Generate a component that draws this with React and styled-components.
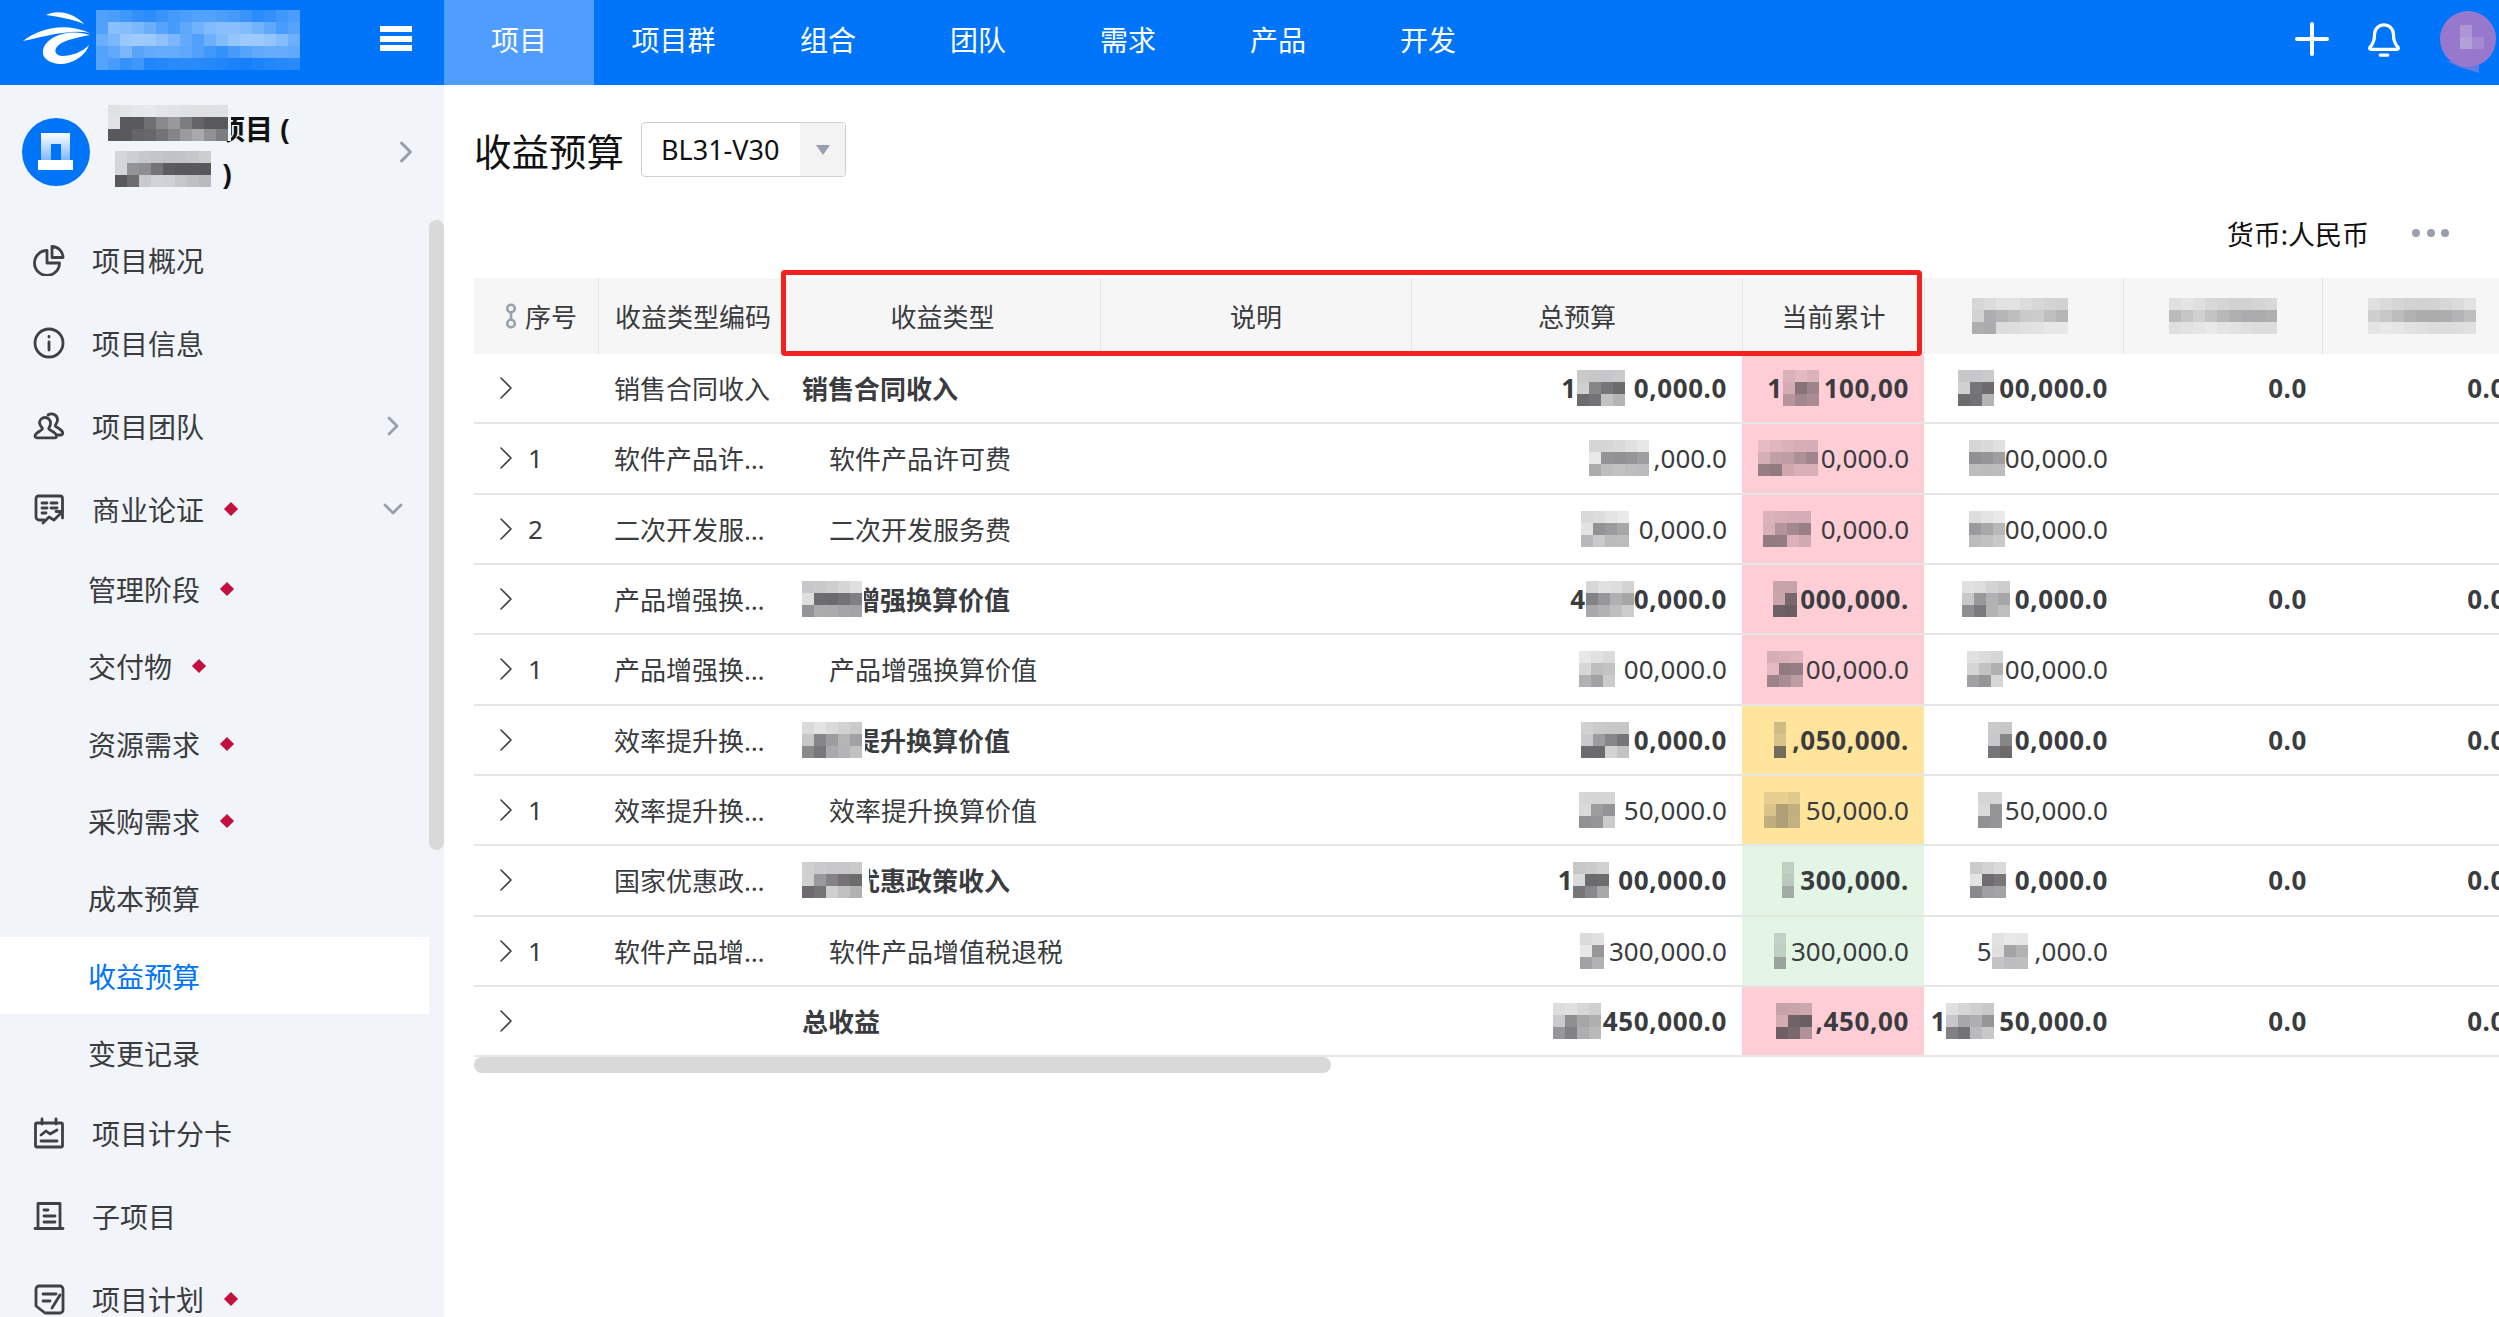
import React from 'react';
import styled, { createGlobalStyle } from 'styled-components';

const blue = '#0075fa';
const ink = '#3a3c40';
const columns = '124px 186px 316px 311px 331px 182px 199px 199px 199px';

const GlobalStyle = createGlobalStyle`
  html, body {
    margin: 0;
    height: 100%;
    overflow: hidden;
    background: #fff;
    font-family: "Noto Sans", "Noto Sans CJK SC", sans-serif;
    color: ${ink};
  }
  * { box-sizing: border-box; }
`;

const Page = styled.div`
  display: flex;
  flex-direction: column;
  height: 1317px;
  width: 2499px;
  overflow: hidden;
`;

const TopBar = styled.header`
  display: flex;
  align-items: stretch;
  flex: 0 0 85px;
  background: ${blue};
  color: #fff;
`;

const Brand = styled.div`
  display: flex;
  align-items: center;
  width: 444px;
  padding-left: 20px;
  & > svg {
    margin-bottom: 5px;
  }
`;

const BrandBlur = styled.div`
  margin-left: -14px;
  margin-bottom: 5px;
`;

const Burger = styled.div`
  display: flex;
  flex-direction: column;
  gap: 3.5px;
  width: 32px;
  margin-left: 70px;
  margin-bottom: 8px;
  span {
    height: 6px;
    background: #fff;
  }
`;

const Tab = styled.div`
  display: flex;
  align-items: center;
  justify-content: center;
  width: ${p => p.$w || 150}px;
  padding-bottom: 8px;
  font-size: 28px;
  background: ${p => (p.$active ? '#4f9eff' : 'transparent')};
`;

const TopActions = styled.div`
  display: flex;
  align-items: center;
  margin-left: auto;
  padding-right: 2px;
  gap: 38px;
  svg:not(:last-child) {
    margin-bottom: 8px;
  }
`;

const Body = styled.div`
  display: flex;
  flex: 1;
  min-height: 0;
`;

const Sidebar = styled.aside`
  position: relative;
  flex: 0 0 444px;
  background: #f1f4f8;
  overflow: hidden;
`;

const SideThumb = styled.div`
  position: absolute;
  top: 135px;
  right: 0;
  width: 15px;
  height: 630px;
  border-radius: 8px;
  background: #d9d9d9;
`;

const SideInner = styled.div`
  width: 429px;
`;

const ProjectHead = styled.div`
  display: flex;
  align-items: center;
  height: 133.5px;
  padding: 0 16px 0 22px;
`;

const ProjectName = styled.div`
  flex: 1;
  margin-left: 18px;
  margin-top: -2px;
  font-size: 28px;
  font-weight: 700;
  color: #111;
`;

const NameLine = styled.div`
  display: flex;
  align-items: center;
  height: 46px;
  margin-left: ${p => p.$indent || 0}px;
  & > span {
    margin-bottom: 10px;
  }
`;

const MenuItem = styled.div`
  display: flex;
  align-items: center;
  height: ${p => (p.$sub ? '77.3px' : '83px')};
  padding: 0 30px 0 ${p => (p.$sub ? '88px' : '33px')};
  gap: ${p => (p.$sub ? 0 : '27px')};
  font-size: 28px;
  color: ${p => (p.$active ? blue : ink)};
  background: ${p => (p.$active ? '#fff' : 'transparent')};
`;

const Diamond = styled.i`
  width: 10px;
  height: 10px;
  margin-left: ${p => (p.$sub ? '22px' : '-5px')};
  background: #c4103f;
  transform: rotate(45deg);
`;

const MenuArrow = styled.span`
  display: flex;
  margin-left: auto;
  margin-right: ${p => p.$nudge || 0}px;
`;

const Main = styled.main`
  flex: 1;
  min-width: 0;
  padding-left: 30px;
  overflow: hidden;
`;

const TitleRow = styled.div`
  display: flex;
  align-items: center;
  gap: 17px;
  height: 55px;
  margin-top: 37px;
`;

const Title = styled.h1`
  margin: 0;
  font-size: 37.5px;
  font-weight: 400;
  color: #111;
`;

const Select = styled.div`
  display: flex;
  align-items: stretch;
  width: 205px;
  height: 55px;
  border: 1.5px solid #cfcfcf;
  border-radius: 4px;
  overflow: hidden;
`;

const SelectValue = styled.div`
  display: flex;
  align-items: center;
  flex: 1;
  padding-left: 19px;
  font-size: 27px;
  color: #111;
`;

const SelectArrow = styled.div`
  display: flex;
  align-items: center;
  justify-content: center;
  width: 45px;
  background: #f3f3f3;
  &::before {
    content: '';
    border-left: 7px solid transparent;
    border-right: 7px solid transparent;
    border-top: 10px solid #9a9fae;
  }
`;

const InfoRow = styled.div`
  display: flex;
  justify-content: flex-end;
  align-items: center;
  gap: 43px;
  height: 44px;
  margin-top: 34px;
  padding-right: 50px;
`;

const Currency = styled.span`
  font-size: 27px;
  color: #111;
`;

const Dots = styled.div`
  display: flex;
  gap: 6.5px;
  i {
    width: 8px;
    height: 8px;
    border-radius: 50%;
    background: #9a9fae;
  }
`;

const TableWrap = styled.div`
  position: relative;
  margin-top: 23px;
`;

const RedBox = styled.div`
  position: absolute;
  left: 307px;
  top: -8px;
  width: 1141px;
  height: 86px;
  border: 5px solid #f5211e;
  border-radius: 4px;
  z-index: 2;
`;

const HeadRow = styled.div`
  display: grid;
  grid-template-columns: ${columns};
  height: 76px;
  background: #f6f6f6;
`;

const HeadCell = styled.div`
  display: flex;
  align-items: center;
  justify-content: ${p => (p.$center ? 'center' : 'flex-start')};
  gap: 8px;
  padding-left: ${p => (p.$center ? 0 : p.$pad || 16)}px;
  font-size: 26px;
  white-space: nowrap;
  border-left: ${p => (p.$first ? 'none' : '1.5px solid #e6e6e6')};
`;

const Row = styled.div`
  display: grid;
  grid-template-columns: ${columns};
  height: 70.33px;
`;

const tints = { pink: '#ffcdd6', yellow: '#ffe49c', green: '#e3f6e6' };

const Cell = styled.div`
  display: flex;
  align-items: center;
  justify-content: ${p => (p.$num ? 'flex-end' : 'flex-start')};
  min-width: 0;
  padding: 0 ${p => p.$right || 15}px 0 ${p => p.$left || 16}px;
  font-size: 26px;
  font-weight: ${p => (p.$bold ? 700 : 400)};
  letter-spacing: ${p => (p.$num && p.$bold ? '0.6px' : 0)};
  white-space: nowrap;
  background: ${p => tints[p.$tint] || 'transparent'};
  border-bottom: 2px solid #e6e6e6;
`;

const Clip = styled.span`
  overflow: hidden;
  text-overflow: ellipsis;
`;

const RowNo = styled.span`
  margin-left: 16px;
`;

const ScrollThumb = styled.div`
  width: 857px;
  height: 16px;
  border-radius: 8px;
  background: #d9d9d9;
`;

const BlurBox = styled.span`
  position: relative;
  z-index: 1;
  display: grid;
  flex: none;
  grid-template-columns: repeat(auto-fill, 12px);
  grid-auto-rows: 12px;
  width: ${p => p.$w}px;
  height: ${p => p.$rows * 12}px;
  margin-right: ${p => -(p.$over || 0)}px;
  overflow: hidden;
  background: ${p => p.$bg || 'transparent'};
`;

const levels = {
  cell: [0.16, 0.42, 0.26],
  head: [0.14, 0.3, 0.1],
  name: [0.08, 0.7, 0.58],
  lower: [0.2, 0.7, 0.24],
  brand: [0.24, 0.4, 0.46, 0.3, 0.12],
};

function Blur({ w, level = 'cell', over, bg, strong, light, seed = 1 }) {
  const base = levels[level];
  const perRow = Math.ceil(w / 12);
  const cells = [];
  base.forEach((alpha, r) => {
    for (let c = 0; c < perRow; c++) {
      const n = Math.abs(Math.sin((c + 1) * 12.9 + (r + 1) * 78.2 + seed * 3.7));
      const a = alpha * (0.65 + n * 0.7) * (strong ? 1.35 : 1);
      const color = light ? `rgba(255,255,255,${a})` : `rgba(62,60,64,${Math.min(a, 0.85)})`;
      cells.push(<i key={`${r}-${c}`} style={{ background: color }} />);
    }
  });
  return (
    <BlurBox $w={w} $rows={base.length} $over={over} $bg={bg}>
      {cells}
    </BlurBox>
  );
}

const LogoMark = () => (
  <svg width="90" height="80" viewBox="0 0 90 80" fill="#fff">
    <path d="M26 15C38 9 54 13 64 24 52 19 40 17 26 15Z" />
    <path d="M3 41C20 28 45 22 70 33 50 29 28 36 3 41Z" />
    <path d="M70 35C50 28 26 36 23 50 21 62 38 66 48 63 58 60 66 54 69 45 62 52 52 56 42 56 34 55 33 49 40 44 48 39 60 37 70 35Z" />
  </svg>
);

const PlusIcon = () => (
  <svg width="34" height="34" viewBox="0 0 34 34" fill="none" stroke="#fff" strokeWidth="4" strokeLinecap="round">
    <path d="M17 2v30M2 17h30" />
  </svg>
);

const BellIcon = () => (
  <svg width="34" height="38" viewBox="0 0 36 38" fill="none" stroke="#fff" strokeWidth="3.4" strokeLinecap="round" strokeLinejoin="round">
    <path d="M3 28c3-3 5-6 5-14a10 10 0 0 1 20 0c0 8 2 11 5 14 .6 1 0 2-1 2H4c-1 0-1.6-1-1-2z" />
    <path d="M14 36h8" />
  </svg>
);

const UserPic = () => (
  <svg width="58" height="64" viewBox="0 0 58 64">
    <path d="M8 50h32v12L20 56z" fill="#5f7be0" />
    <circle cx="29" cy="28" r="28" fill="#9878cc" />
    <rect x="21" y="14" width="12" height="12" fill="#ad95d6" />
    <rect x="21" y="26" width="12" height="12" fill="#b3a0da" />
    <rect x="33" y="26" width="12" height="12" fill="#a58ad3" />
  </svg>
);

const ProjectAvatar = () => (
  <svg width="68" height="68" viewBox="0 0 68 68">
    <defs>
      <linearGradient id="towerFade" x1="0" y1="0" x2="0" y2="1">
        <stop offset="0" stopColor="#fff" />
        <stop offset="1" stopColor="#7fb8ff" />
      </linearGradient>
    </defs>
    <circle cx="34" cy="34" r="34" fill={blue} />
    <path d="M19 15h29v27H39V26H29v16H19z" fill="url(#towerFade)" />
    <rect x="16" y="42" width="35" height="10" fill="#fff" />
  </svg>
);

const iconProps = {
  width: 32,
  height: 32,
  viewBox: '0 0 32 32',
  fill: 'none',
  stroke: '#3d4047',
  strokeWidth: 2.8,
  strokeLinecap: 'round',
  strokeLinejoin: 'round',
};

const PieIcon = () => (
  <svg {...iconProps}>
    <path d="M14 6.5A12.5 12.5 0 1 0 26.5 19H14z" />
    <path d="M19 2.5A11 11 0 0 1 30 13.5H19z" />
  </svg>
);

const InfoIcon = () => (
  <svg {...iconProps}>
    <circle cx="16" cy="16" r="14" />
    <path d="M16 15v8" />
    <path d="M16 9.5v.6" />
  </svg>
);

const TeamIcon = () => (
  <svg {...iconProps}>
    <path d="M12 7.5a5.5 5.5 0 0 1 5.5 6c0 2.500-1.500 3.700-1.800 5.300 0 1.400 7 2.700 7.800 7 .2 1.200-.6 2-1.700 2H4c-1.300 0-2.300-1-1.900-2.300 1-3.700 7.400-5 7.400-6.700-.4-1.600-3-3.200-3-6.300a5.500 5.500 0 0 1 5.500-5z" />
    <path d="M15 5a6 6 0 0 1 9.500 5c0 3-2 4.200-2.300 5.700.3 1.800 6.500 3 7.500 7 .3 1.200-.6 2.300-2 2.300h-3" />
  </svg>
);

const CaseIcon = () => (
  <svg {...iconProps}>
    <path d="M11 27H6a3 3 0 0 1-3-3V5.500a2.500 2.500 0 0 1 2.500-2.500H27a2.500 2.500 0 0 1 2.500 2.500V18" />
    <path d="M9 10h5M18 10h6M9 15h5M18 15h6M9 20h4" />
    <path d="M10 30l6-6 5 3 8-8M23 18.500h6.500V25" />
  </svg>
);

const ScoreIcon = () => (
  <svg {...iconProps}>
    <rect x="2.500" y="6" width="27" height="24" rx="1.500" />
    <path d="M9 2v5M23 2v5M8 18l5-4 4 3 7-4M8 24h16" />
  </svg>
);

const ListIcon = () => (
  <svg {...iconProps}>
    <path d="M5 28V3.500h22V28M2 28.500h28M11 10h4M11 16h11M11 22h11" />
  </svg>
);

const PlanIcon = () => (
  <svg {...iconProps}>
    <path d="M12 30L3 23V6a3 3 0 0 1 3-3h21a3 3 0 0 1 3 3v21a3 3 0 0 1-3 3z" />
    <path d="M10 11h13M10 18h7M19 25l8-13" />
  </svg>
);

const ChevronRight = ({ w = 12, h = 20 }) => (
  <svg width={w} height={h} viewBox="0 0 12 20" fill="none" stroke="#9a9fae" strokeWidth="2.8" strokeLinecap="round" strokeLinejoin="round">
    <path d="M2 2l8 8-8 8" />
  </svg>
);

const ChevronDown = () => (
  <svg width="20" height="12" viewBox="0 0 20 12" fill="none" stroke="#9a9fae" strokeWidth="2.800" strokeLinecap="round" strokeLinejoin="round">
    <path d="M2 2l8 8 8-8" />
  </svg>
);

const RowChevron = () => (
  <svg width="12" height="22" viewBox="0 0 12 22" fill="none" stroke="#3f4145" strokeWidth="1.6" strokeLinecap="round" strokeLinejoin="round">
    <path d="M1 1l10 10L1 21" />
  </svg>
);

const LinkIcon = () => (
  <svg width="12" height="26" viewBox="0 0 12 26" fill="none" stroke="#9aa0ad" strokeWidth="2.600">
    <circle cx="6" cy="5.500" r="3.800" />
    <circle cx="6" cy="20.500" r="3.800" />
    <path d="M6 9v8" />
  </svg>
);

const topTabs = [
  { label: '项目', active: true },
  { label: '项目群', w: 159 },
  { label: '组合' },
  { label: '团队' },
  { label: '需求' },
  { label: '产品' },
  { label: '开发' },
];

const menuTop = [
  { label: '项目概况', icon: <PieIcon /> },
  { label: '项目信息', icon: <InfoIcon /> },
  { label: '项目团队', icon: <TeamIcon />, arrow: <ChevronRight /> },
  { label: '商业论证', icon: <CaseIcon />, mark: true, arrow: <ChevronDown />, nudge: -4 },
];

const menuSub = [
  { label: '管理阶段', mark: true },
  { label: '交付物', mark: true },
  { label: '资源需求', mark: true },
  { label: '采购需求', mark: true },
  { label: '成本预算' },
  { label: '收益预算', active: true },
  { label: '变更记录' },
];

const menuBottom = [
  { label: '项目计分卡', icon: <ScoreIcon /> },
  { label: '子项目', icon: <ListIcon /> },
  { label: '项目计划', icon: <PlanIcon />, mark: true },
];

// each amount: [visible prefix, width of the mosaic, visible rest]
const rows = [
  { code: '销售合同收入', name: '销售合同收入', bold: true, tint: 'pink', zero: true,
    total: ['1', 54, '0,000.0'], current: ['1', 38, '100,00'], third: ['', 38, '00,000.0'] },
  { no: '1', code: '软件产品许可费', name: '软件产品许可费', tint: 'pink',
    total: ['', 62, ',000.0'], current: ['', 60, '0,000.0'], third: ['', 33, '00,000.0'] },
  { no: '2', code: '二次开发服务费', name: '二次开发服务费', tint: 'pink',
    total: ['', 55, '0,000.0'], current: ['', 55, '0,000.0'], third: ['', 33, '00,000.0'] },
  { code: '产品增强换算价值', name: '增强换算价值', cover: [52, 10], bold: true, tint: 'pink', zero: true,
    total: ['4', 45, '0,000.0'], current: ['', 24, '000,000.'], third: ['', 50, '0,000.0'] },
  { no: '1', code: '产品增强换算价值', name: '产品增强换算价值', tint: 'pink',
    total: ['', 42, '00,000.0'], current: ['', 36, '00,000.0'], third: ['', 35, '00,000.0'] },
  { code: '效率提升换算价值', name: '提升换算价值', cover: [52, 11], bold: true, tint: 'yellow', zero: true,
    total: ['', 50, '0,000.0'], current: ['', 15, ',050,000.'], third: ['', 24, '0,000.0'] },
  { no: '1', code: '效率提升换算价值', name: '效率提升换算价值', tint: 'yellow',
    total: ['', 42, '50,000.0'], current: ['', 39, '50,000.0'], third: ['', 24, '50,000.0'] },
  { code: '国家优惠政策收入', name: '优惠政策收入', cover: [52, 15], bold: true, tint: 'green', zero: true,
    total: ['1', 42, '00,000.0'], current: ['', 15, '300,000.'], third: ['', 42, '0,000.0'] },
  { no: '1', code: '软件产品增值税退税', name: '软件产品增值税退税', tint: 'green',
    total: ['', 26, '300,000.0'], current: ['', 14, '300,000.0'], third: ['5', 40, ',000.0'] },
  { code: '', name: '总收益', bold: true, tint: 'pink', zero: true,
    total: ['', 47, '450,000.0'], current: ['', 37, ',450,00'], third: ['1', 50, '50,000.0'] },
];

const Amount = ({ value, bold, seed }) => (
  <>
    {value[0]}
    <Blur w={value[1] + 3} strong={bold} seed={seed} />
    {value[2]}
  </>
);

const Menu = ({ items }) =>
  items.map(item => (
    <MenuItem key={item.label} $active={item.active}>
      {item.icon}
      <span>{item.label}</span>
      {item.mark && <Diamond />}
      {item.arrow && <MenuArrow $nudge={item.nudge}>{item.arrow}</MenuArrow>}
    </MenuItem>
  ));

export default function App() {
  return (
    <Page>
      <GlobalStyle />
      <TopBar>
        <Brand>
          <LogoMark />
          <BrandBlur>
            <Blur w={214} level="brand" light seed={9} />
          </BrandBlur>
          <Burger>
            <span />
            <span />
            <span />
          </Burger>
        </Brand>
        {topTabs.map(tab => (
          <Tab key={tab.label} $active={tab.active} $w={tab.w}>
            {tab.label}
          </Tab>
        ))}
        <TopActions>
          <PlusIcon />
          <BellIcon />
          <UserPic />
        </TopActions>
      </TopBar>
      <Body>
        <Sidebar>
          <SideInner>
            <ProjectHead>
              <ProjectAvatar />
              <ProjectName>
                <NameLine>
                  <Blur w={123} level="name" over={14} bg="#f1f4f8" seed={4} />
                  项目 (
                </NameLine>
                <NameLine $indent={7}>
                  <Blur w={100} level="lower" seed={6} />
                  &nbsp;)
                </NameLine>
              </ProjectName>
              <ChevronRight w={14} h={22} />
            </ProjectHead>
            <Menu items={menuTop} />
            {menuSub.map(item => (
              <MenuItem key={item.label} $sub $active={item.active}>
                <span>{item.label}</span>
                {item.mark && <Diamond $sub />}
              </MenuItem>
            ))}
            <Menu items={menuBottom} />
          </SideInner>
          <SideThumb />
        </Sidebar>
        <Main>
          <TitleRow>
            <Title>收益预算</Title>
            <Select>
              <SelectValue>BL31-V30</SelectValue>
              <SelectArrow />
            </Select>
          </TitleRow>
          <InfoRow>
            <Currency>货币:人民币</Currency>
            <Dots>
              <i />
              <i />
              <i />
            </Dots>
          </InfoRow>
          <TableWrap>
            <RedBox />
            <HeadRow>
              <HeadCell $first $pad={31}>
                <LinkIcon />
                序号
              </HeadCell>
              <HeadCell>收益类型编码</HeadCell>
              <HeadCell $center>收益类型</HeadCell>
              <HeadCell $center>说明</HeadCell>
              <HeadCell $center>总预算</HeadCell>
              <HeadCell $center>当前累计</HeadCell>
              <HeadCell $center>
                <Blur w={105} level="head" seed={21} />
              </HeadCell>
              <HeadCell $center>
                <Blur w={108} level="head" seed={22} />
              </HeadCell>
              <HeadCell $center>
                <Blur w={108} level="head" seed={23} />
              </HeadCell>
            </HeadRow>
            {rows.map((row, i) => (
              <Row key={i}>
                <Cell $left={26}>
                  <RowChevron />
                  {row.no && <RowNo>{row.no}</RowNo>}
                </Cell>
                <Cell $right={13}>
                  <Clip>{row.code}</Clip>
                </Cell>
                <Cell $bold={row.bold} $left={row.bold ? 18 : 45}>
                  {row.cover && <Blur w={row.cover[0] + row.cover[1]} over={row.cover[1]} bg="#fff" strong seed={i} />}
                  {row.name}
                </Cell>
                <Cell />
                <Cell $num $bold={row.bold}>
                  <Amount value={row.total} bold={row.bold} seed={i + 30} />
                </Cell>
                <Cell $num $bold={row.bold} $tint={row.tint}>
                  <Amount value={row.current} bold={row.bold} seed={i + 50} />
                </Cell>
                <Cell $num $bold={row.bold}>
                  <Amount value={row.third} bold={row.bold} seed={i + 70} />
                </Cell>
                <Cell $num $bold={row.bold}>{row.zero && '0.0'}</Cell>
                <Cell $num $bold={row.bold}>{row.zero && '0.0'}</Cell>
              </Row>
            ))}
            <ScrollThumb />
          </TableWrap>
        </Main>
      </Body>
    </Page>
  );
}
